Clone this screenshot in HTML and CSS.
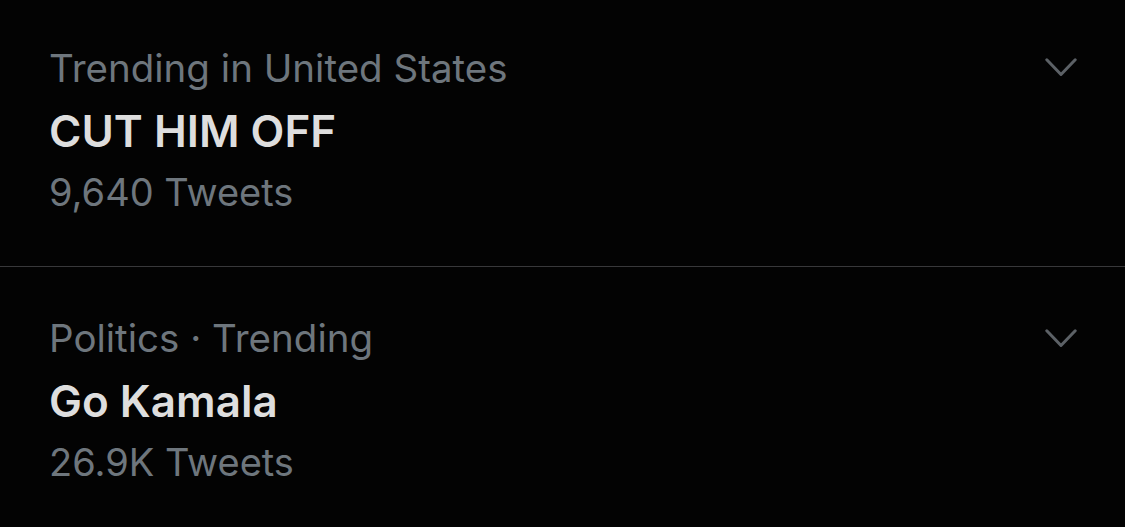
FILE: index.html
```html
<!DOCTYPE html>
<html>
<head>
<meta charset="utf-8">
<link rel="stylesheet" href="styles.css">
</head>
<body>
<div class="list">
  <div class="trend first">
    <div class="text">
      <div class="meta">Trending in United States</div>
      <div class="title">CUT HIM OFF</div>
      <div class="count">9,640 Tweets</div>
    </div>
    <svg class="chev" width="32" height="19" viewBox="0 0 32 19"><path d="M1.8 1.8 L16 16.5 L30.2 1.8" fill="none" stroke="#5c6166" stroke-width="3" stroke-linecap="round" stroke-linejoin="round"/></svg>
  </div>
  <div class="divider"></div>
  <div class="trend second">
    <div class="text">
      <div class="meta">Politics · Trending</div>
      <div class="title">Go Kamala</div>
      <div class="count">26.9K Tweets</div>
    </div>
    <svg class="chev" width="32" height="19" viewBox="0 0 32 19"><path d="M1.8 1.8 L16 16.5 L30.2 1.8" fill="none" stroke="#5c6166" stroke-width="3" stroke-linecap="round" stroke-linejoin="round"/></svg>
  </div>
</div>
</body>
</html>
```
FILE: styles.css
```css
html, body {
  margin: 0;
  padding: 0;
  background: #030303;
  width: 1125px;
  height: 527px;
  overflow: hidden;
}
.list {
  display: flex;
  flex-direction: column;
  font-family: Inter, "Noto Sans", sans-serif;
}
.trend {
  display: flex;
  justify-content: space-between;
  align-items: flex-start;
  padding: 0 48px 0 49px;
}
.trend.first {
  padding-top: 37px;
  height: 229px;
}
.trend.second {
  padding-top: 40px;
  height: 220px;
}
.text {
  display: flex;
  flex-direction: column;
}
.meta, .count {
  color: #6e767d;
  font-size: 38.5px;
  line-height: 62px;
  white-space: nowrap;
}
.meta { height: 63px; }
.count { height: 62px; font-size: 38px; }
.title {
  color: #dedede;
  font-size: 44px;
  font-weight: 600;
  line-height: 62px;
  height: 61px;
  white-space: nowrap;
}
.first .chev { margin-top: 21px; }
.second .chev { margin-top: 22px; }
.divider {
  height: 1px;
  background: #38383a;
}
```
